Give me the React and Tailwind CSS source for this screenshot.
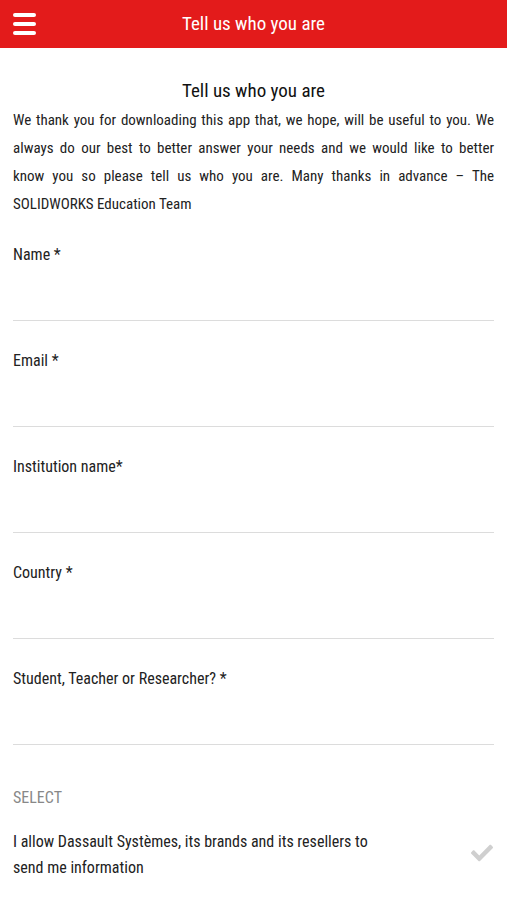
import { FaCheck } from 'react-icons/fa';

const font = { fontFamily: "'Roboto Condensed', Roboto, 'DejaVu Sans Condensed', sans-serif", fontStretch: 'condensed' };

const intro = [
  'We thank you for downloading this app that, we hope, will be useful to you. We',
  'always do our best to better answer your needs and we would like to better',
  'know you so please tell us who you are. Many thanks in advance – The',
];

const fields = ['Name *', 'Email *', 'Institution name*', 'Country *', 'Student, Teacher or Researcher? *'];

export default function App() {
  return (
    <div className="min-h-screen bg-white text-[#222]" style={font}>
      <header className="h-12 bg-[#e31b1b] flex items-center px-[13px] relative">
        <div className="flex flex-col gap-[5px] w-[23px]">
          <span className="h-[4px] rounded-sm bg-white"></span>
          <span className="h-[4px] rounded-sm bg-white"></span>
          <span className="h-[4px] rounded-sm bg-white"></span>
        </div>
        <h1 className="absolute inset-0 flex items-center justify-center text-white text-[19px]">Tell us who you are</h1>
      </header>

      <main className="px-[13px]">
        <h2 className="mt-[31px] text-center text-[19px] leading-6 text-[#111]">Tell us who you are</h2>
        <div className="mt-[3px] text-[15px] leading-[28px] text-[#222]">
          {intro.map((line) => (
            <div key={line} className="whitespace-nowrap text-justify [text-align-last:justify]">{line}</div>
          ))}
          <div>SOLIDWORKS Education Team</div>
        </div>

        <div className="mt-[-3px]">
          {fields.map((f) => (
            <div key={f} className="pt-[30px]">
              <label className="block text-[16px] leading-5 text-[#222]">{f}</label>
              <div className="h-[56px] border-b border-[#dcdcdc]"></div>
            </div>
          ))}
        </div>

        <div className="mt-[43px] text-[16px] leading-5 text-[#888]">SELECT</div>
        <div className="mt-[21px] flex items-center justify-between">
          <p className="text-[16px] leading-[26px] text-[#222]">
            I allow Dassault Systèmes, its brands and its resellers to
            <br />
            send me information
          </p>
          <FaCheck className="text-[#cfcfcf] w-[22px] h-[22px] mr-[1px] mt-[-4px]" />
        </div>
      </main>
    </div>
  );
}
